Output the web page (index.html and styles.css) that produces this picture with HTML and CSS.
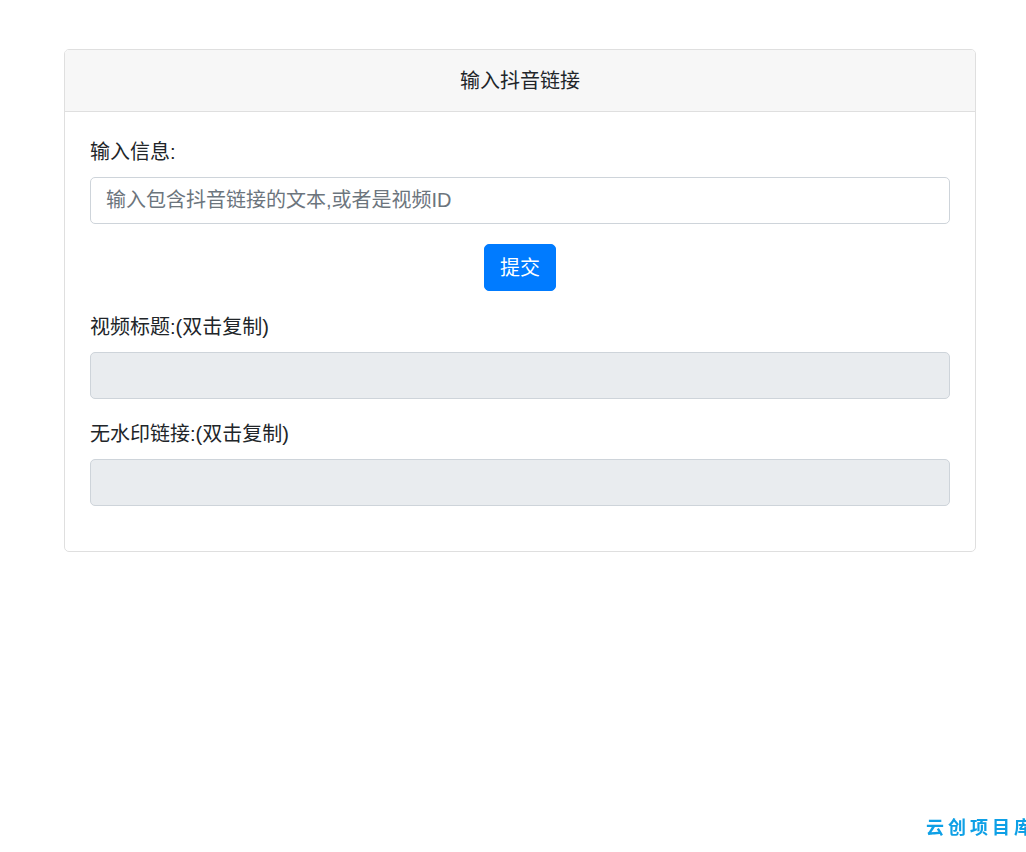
FILE: index.html
```html
<!DOCTYPE html>
<html lang="zh">
<head>
<meta charset="utf-8">
<title>输入抖音链接</title>
<link rel="stylesheet" href="styles.css">
</head>
<body>
<div class="page">
  <div class="card">
    <div class="card-header">输入抖音链接</div>
    <div class="card-body">
      <div class="form-group">
        <label class="label">输入信息:</label>
        <input class="form-control" type="text" placeholder="输入包含抖音链接的文本,或者是视频ID">
      </div>
      <div class="form-group center btn-group">
        <button class="btn" type="button">提交</button>
      </div>
      <div class="form-group">
        <label class="label">视频标题:(双击复制)</label>
        <input class="form-control" type="text" readonly>
      </div>
      <div class="form-group">
        <label class="label">无水印链接:(双击复制)</label>
        <input class="form-control" type="text" readonly>
      </div>
    </div>
  </div>
</div>
<div class="watermark">云创项目库</div>
</body>
</html>
```
FILE: styles.css
```css
* { box-sizing: border-box; }
html, body { margin: 0; padding: 0; }
body {
  font-family: "Liberation Sans", "Noto Sans CJK SC", sans-serif;
  font-size: 20px;
  line-height: 30px;
  color: #212529;
  background: #fff;
}
.page {
  padding: 49px 0 0 64px;
}
.card {
  width: 912px;
  border: 1px solid #dfdfdf;
  border-radius: 5px;
  background: #fff;
}
.card-header {
  background: #f7f7f7;
  border-bottom: 1px solid #dfdfdf;
  padding: 16px 25px 15px;
  text-align: center;
  border-radius: 4px 4px 0 0;
}
.card-body {
  padding: 25px;
}
.form-group {
  margin-bottom: 20px;
}
.btn-group { margin-bottom: 21px; }
.center { text-align: center; }
.label {
  display: block;
  margin-bottom: 10px;
}
.form-control {
  display: block;
  width: 100%;
  height: 47px;
  padding: 7px 15px;
  font-family: inherit;
  font-size: 20px;
  line-height: 30px;
  color: #495057;
  background: #fff;
  border: 1px solid #ced4da;
  border-radius: 5px;
  outline: none;
}
.form-control::placeholder { color: #6c757d; }
.form-control[readonly] { background: #e9ecef; }
.btn {
  display: inline-block;
  height: 47px;
  padding: 7px 15px;
  font-family: inherit;
  font-size: 20px;
  line-height: 30px;
  color: #fff;
  background: #007bff;
  border: 1px solid #007bff;
  border-radius: 5px;
  cursor: pointer;
}
.watermark {
  position: fixed;
  left: 926px;
  bottom: 12px;
  font-size: 18px;
  line-height: 24px;
  font-weight: bold;
  letter-spacing: 4px;
  color: #0ea0e6;
  white-space: nowrap;
}
```
